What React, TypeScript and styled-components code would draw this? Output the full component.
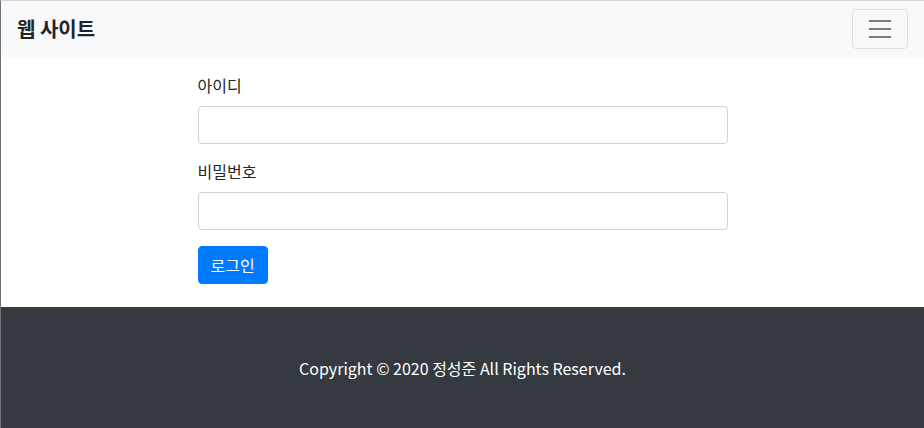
import styled, { createGlobalStyle } from "styled-components";

const GlobalStyle = createGlobalStyle`
    * {
        box-sizing: border-box;
    }
    html,
    body {
        margin: 0;
        padding: 0;
        background: #ffffff;
    }
    body {
        font-family: "Noto Sans CJK KR", "Noto Sans", sans-serif;
        font-size: 16px;
        line-height: 1.5;
        color: #212529;
        border-top: 1px solid #d6d6d6;
        border-left: 1px solid #6e7378;
        height: 428px;
        overflow: hidden;
    }
`;

const Page = styled.div`
    display: flex;
    flex-direction: column;
    height: 427px;
`;

const Navbar = styled.nav`
    height: 56px;
    display: flex;
    align-items: center;
    justify-content: space-between;
    padding: 0 16px;
    background: #f8f9fa;
`;

const Brand = styled.a`
    font-size: 20px;
    font-weight: 700;
    color: #212529;
    text-decoration: none;
    line-height: 30px;
`;

const Toggler = styled.button`
    width: 56px;
    height: 40px;
    display: flex;
    align-items: center;
    justify-content: center;
    background: transparent;
    border: 1px solid rgba(0, 0, 0, 0.1);
    border-radius: 4px;
    padding: 0;
    cursor: pointer;
`;

const Main = styled.main`
    width: 530px;
    margin: 0 auto;
    padding: 17px 0 23px;
`;

const FormGroup = styled.div`
    margin-bottom: 16px;
`;

const Label = styled.label`
    display: block;
    margin-bottom: 10px;
    line-height: 22px;
`;

const Input = styled.input`
    display: block;
    width: 100%;
    height: 38px;
    padding: 6px 12px;
    font-size: 16px;
    border: 1px solid #ced4da;
    border-radius: 4px;
    background: #fff;
`;

const SubmitButton = styled.button`
    height: 38px;
    padding: 0 12px;
    font-family: inherit;
    font-size: 16px;
    color: #fff;
    background: #007bff;
    border: 1px solid #007bff;
    border-radius: 4px;
    cursor: pointer;
`;

const Footer = styled.footer`
    flex: 1;
    display: flex;
    align-items: center;
    justify-content: center;
    background: #343a40;
    color: #ffffff;
    font-size: 16px;
`;

function HamburgerIcon() {
    return (
        <svg width="30" height="30" viewBox="0 0 30 30">
            <path
                stroke="rgba(0,0,0,0.5)"
                strokeWidth="2"
                strokeMiterlimit="10"
                d="M4 7h22M4 15h22M4 23h22"
            />
        </svg>
    );
}

function App() {
    return (
        <Page>
            <GlobalStyle />
            <Navbar>
                <Brand href="#">웹 사이트</Brand>
                <Toggler type="button" aria-label="메뉴">
                    <HamburgerIcon />
                </Toggler>
            </Navbar>

            <Main>
                <form onSubmit={(e) => e.preventDefault()}>
                    <FormGroup>
                        <Label htmlFor="userId">아이디</Label>
                        <Input id="userId" type="text" />
                    </FormGroup>
                    <FormGroup>
                        <Label htmlFor="userPassword">비밀번호</Label>
                        <Input id="userPassword" type="password" />
                    </FormGroup>
                    <SubmitButton type="submit">로그인</SubmitButton>
                </form>
            </Main>

            <Footer>Copyright © 2020 정성준 All Rights Reserved.</Footer>
        </Page>
    );
}

export default App;
